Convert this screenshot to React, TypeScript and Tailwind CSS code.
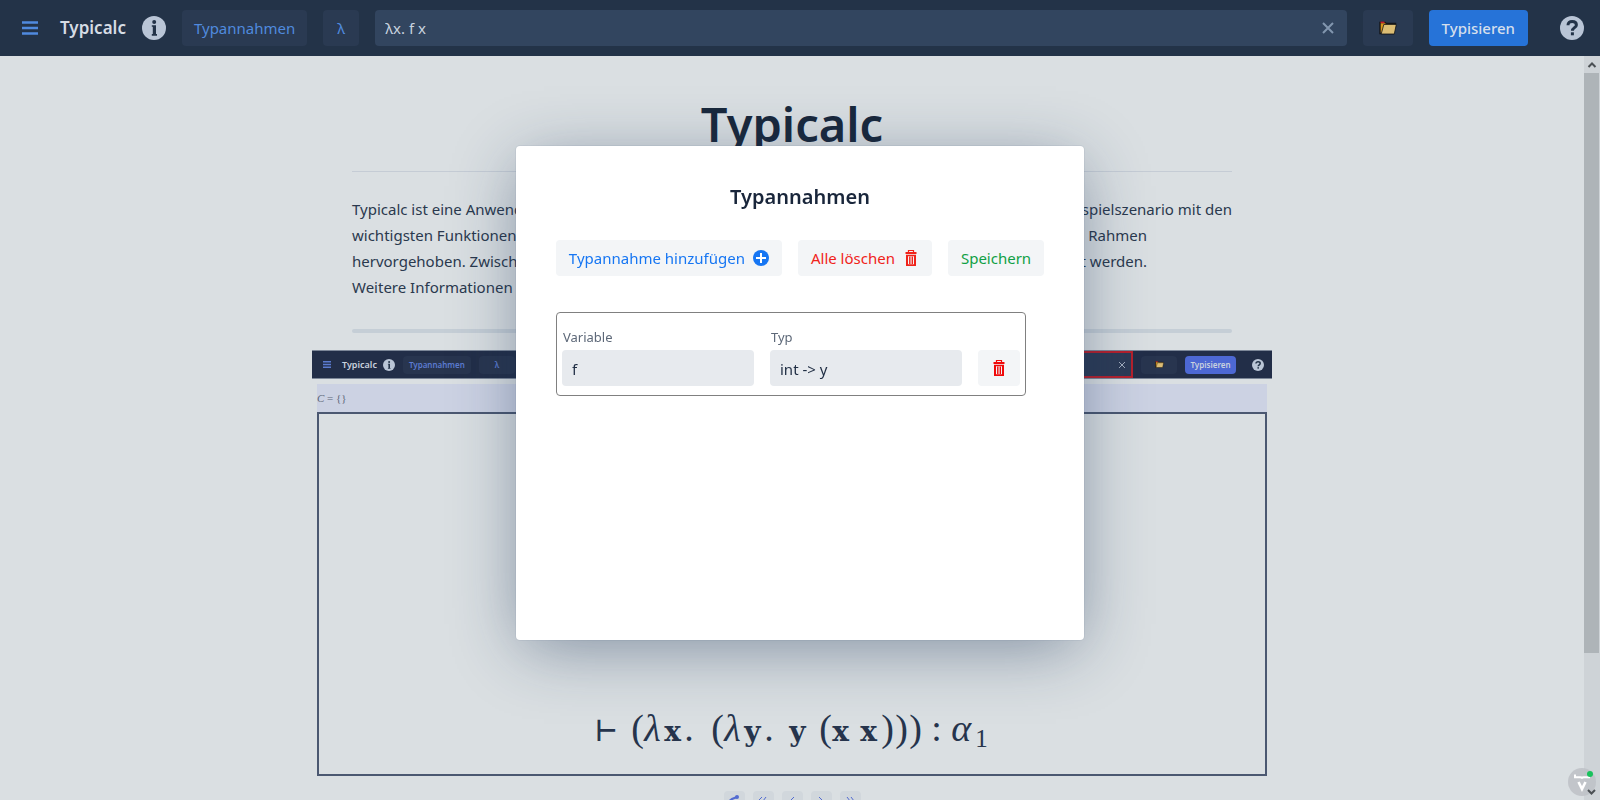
import React, { useState } from "react";

const BurgerIcon = ({ className }: { className: string }) => (
  <svg viewBox="0 0 16 14" className={className} aria-hidden="true">
    <path d="M0 1.500h16M0 7h16M0 12.500h16" stroke="currentColor" strokeWidth="2.600" fill="none" />
  </svg>
);

const InfoIcon = ({ className }: { className: string }) => (
  <svg viewBox="0 0 24 24" className={className} aria-hidden="true">
    <circle cx="12" cy="12" r="12" fill="#b9c5d6" />
    <circle cx="12.200" cy="6" r="2" fill="#233348" />
    <path d="M9.800 9.300h4.200v8.700h1v1.700H9.800V18h1v-7.200h-1z" fill="#233348" />
  </svg>
);

const HelpIcon = ({ className }: { className: string }) => (
  <svg viewBox="0 0 24 24" className={className} aria-hidden="true">
    <circle cx="12" cy="12" r="12" fill="#b9c5d6" />
    <path d="M8 9.200C8 6.600 9.600 5.600 12.100 5.600s4.300 1.300 4.300 3.300c0 2.700-4 2.800-4 5.800" stroke="#233348" strokeWidth="3" fill="none" />
    <rect x="10.900" y="16.300" width="3" height="3" fill="#233348" />
  </svg>
);

const FolderIcon = ({ className }: { className: string }) => (
  <svg viewBox="0 0 18 14" className={className} aria-hidden="true">
    <path d="M1 12.500V1.500h5l1.500 1h9v3l-2 7z" fill="#d9961c" stroke="#14161a" strokeWidth="1.400" />
    <path d="M1.500.6h4v1.500h-4z" fill="#c81e2b" />
    <path d="M2.200 13 4.800 3.500h12.500L15.300 13z" fill="#dcbd74" stroke="#14161a" strokeWidth=".8" />
  </svg>
);

const PlusIcon = () => (
  <svg viewBox="0 0 16 16" className="size-4" aria-hidden="true">
    <circle cx="8" cy="8" r="8" fill="currentColor" />
    <path d="M8 3v10M3 8h10" stroke="#fff" strokeWidth="2" />
  </svg>
);

const TrashIcon = () => (
  <svg viewBox="0 0 16 16" className="size-4" aria-hidden="true" fill="none" stroke="currentColor">
    <path d="M5.500 2.500v-2h5v2" strokeWidth="1.200" />
    <path d="M2.500 3h11" strokeWidth="2" />
    <path d="M4 5v10.200h8V5" strokeWidth="2" />
    <path d="M3 5.500h10" strokeWidth="1.500" />
    <path d="M6.800 6.500V14M9.300 6.500V14" strokeWidth="1.400" />
  </svg>
);

const formula: [string, string][] = [
  ["⊢", "w-[35px] font-['DejaVu_Sans_Mono'] text-[34px]"],
  ["(", "w-[13px] text-[38px]"],
  ["λ", "w-[20px] text-[38px] italic"],
  ["x", "w-[20px] font-['DejaVu_Serif'] text-[28px] font-bold"],
  [".", "w-[27px] text-[38px]"],
  ["(", "w-[13px] text-[38px]"],
  ["λ", "w-[20px] text-[38px] italic"],
  ["y", "w-[20px] font-['DejaVu_Serif'] text-[28px] font-bold"],
  [".", "w-[25px] text-[38px]"],
  ["y", "w-[30px] font-['DejaVu_Serif'] text-[28px] font-bold"],
  ["(", "w-[13px] text-[38px]"],
  ["x", "w-[28px] font-['DejaVu_Serif'] text-[28px] font-bold"],
  ["x", "w-[21px] font-['DejaVu_Serif'] text-[28px] font-bold"],
  [")", "w-[14px] text-[38px]"],
  [")", "w-[14px] text-[38px]"],
  [")", "w-[22px] text-[38px]"],
  [":", "w-[20px] text-[38px]"],
  ["α", "w-[24px] text-[38px] italic"],
];

const Preview = () => (
  <figure className="w-[960px]">
    <div className="flex h-[29px] items-center border-y border-[#7c8798] bg-[#222e48] px-2 text-[8px] font-semibold text-[#c9d1de]">
      <BurgerIcon className="ml-[3px] h-[7px] w-2 text-[#5b7bd0]" />
      <span className="ml-[11px] text-[9px]">Typicalc</span>
      <InfoIcon className="ml-[6px] size-3" />
      <span className="ml-2 rounded-sm bg-[#28354f] px-[6px] py-[3px] text-[#5b7bd0]">Typannahmen</span>
      <span className="ml-2 rounded-sm bg-[#28354f] px-4 py-[3px] text-[#5b7bd0]">λ</span>
      <span className="ml-2 flex h-[27px] flex-1 items-center justify-end border-2 border-[#b5202c] bg-[#2c3b56] pr-[6px] text-[#a3aebf]">
        <svg viewBox="0 0 6 6" className="size-[6px]"><path d="m0 0 6 6M6 0 0 6" stroke="currentColor" /></svg>
      </span>
      <span className="ml-2 flex h-[18px] w-9 items-center justify-center rounded-sm bg-[#28354f]">
        <FolderIcon className="h-[7px] w-[9px]" />
      </span>
      <span className="ml-2 flex h-[18px] w-[51px] items-center justify-center rounded-sm bg-[#4d68d3]">Typisieren</span>
      <HelpIcon className="ml-4 size-3" />
    </div>
    <div className="mx-[5px] mt-[5px] flex h-[28px] items-center bg-[#ccd2e3] font-['Liberation_Serif',serif] text-[11px] text-[#5b6577]">
      <span><i>C</i> = {"{}"}</span>
    </div>
    <div className="mx-[5px] flex h-[364px] items-end justify-center border-2 border-[#4b5871] pb-[18px]">
      <div className="flex items-baseline font-['Liberation_Serif',serif] leading-[48px] text-[#26344c]">
        {formula.map(([glyph, style], i) => (
          <span key={i} className={style}>{glyph}</span>
        ))}
        <sub className="text-[25px]">1</sub>
      </div>
    </div>
    <div className="mt-[15px] flex justify-center gap-2">
      {["M4 9 8 6 13 4", "M9 4 6 7M13 4l-3 4", "M12 4 8 8", "M8 4l4 4", "M7 4l3 4M11 4l3 4"].map((d, i) => (
        <span key={i} className="flex h-5 w-[21px] justify-center rounded-sm bg-[#d1d7dc] pt-[2px]">
          <svg viewBox="0 0 20 12" className="h-3 w-5" fill="none" stroke="#526bd1" strokeWidth={i === 0 ? 2 : 1}>
            <path d={d} />
            {i === 0 && <circle cx="13" cy="4" r="1" fill="#526bd1" />}
          </svg>
        </span>
      ))}
    </div>
  </figure>
);

const Scrollbar = () => (
  <div className="flex w-4 shrink-0 flex-col items-center bg-[#ced3d7]" aria-hidden="true">
    <svg viewBox="0 0 16 17" className="h-[17px] w-4"><path d="m4.500 11 3.500-3.500 3.500 3.500" fill="none" stroke="#4b5054" strokeWidth="2" /></svg>
    <div className="h-[78%] w-full border-r border-[#ced3d7] bg-[#aeb4b8]" />
  </div>
);

const Line = ({ start, end, className }: { start: string; end?: string; className?: string }) => (
  <span className={"flex justify-between whitespace-nowrap " + (className ?? "")}>
    <span>{start}</span>
    {end && <span>{end}</span>}
  </span>
);

const quiet = "flex h-9 items-center justify-center rounded bg-[#f3f5f7]";

export default function App() {
  const [term, setTerm] = useState("λx. f x");
  const [variable, setVariable] = useState("f");
  const [type, setType] = useState("int -> y");

  return (
    <div className="flex h-screen flex-col overflow-hidden bg-[#dadfe2] font-['Noto_Sans',sans-serif] text-[15px] text-[#2a394e]">
      <header className="flex h-14 shrink-0 items-center gap-4 bg-[#233348] pr-4 pl-[22px]">
        <button aria-label="Menü" className="text-[#508ade]">
          <BurgerIcon className="h-[14px] w-4" />
        </button>
        <span className="ml-[6px] text-[17px] font-semibold text-[#d5dce4]">Typicalc</span>
        <button aria-label="Info"><InfoIcon className="size-6" /></button>
        <button className="h-9 rounded bg-[#2a3a52] px-3 pt-px text-[15px] text-[#508ade]">Typannahmen</button>
        <button className="h-9 w-9 rounded bg-[#2a3a52] pt-px text-[15px] text-[#508ade]">λ</button>
        <div className="flex h-9 min-w-0 flex-1 items-center rounded bg-[#32455f] px-[10px]">
          <input aria-label="Lambda-Term" value={term} onChange={(e) => setTerm(e.target.value)} className="min-w-0 flex-1 bg-transparent text-[#c8d3df] outline-none" />
          <button aria-label="Eingabe löschen" onClick={() => setTerm("")} className="pr-[3px] text-[#8296af]">
            <svg viewBox="0 0 12 12" className="size-3"><path d="m1 1 10 10M11 1 1 11" stroke="currentColor" strokeWidth="2" /></svg>
          </button>
        </div>
        <button aria-label="Beispiele" className="flex h-9 w-[50px] items-center justify-center rounded bg-[#2a3a52]">
          <FolderIcon className="h-[14px] w-[18px]" />
        </button>
        <button className="h-9 rounded bg-[#2673d8] px-[13px] pt-px text-[15px] font-medium text-[#d5dfec]">Typisieren</button>
        <button aria-label="Hilfe" className="ml-4"><HelpIcon className="size-6" /></button>
      </header>

      <div className="flex min-h-0 flex-1">
        <main className="flex min-w-0 flex-1 flex-col items-center overflow-hidden pt-8">
          <h1 className="text-[47px] leading-[72px] font-semibold text-[#19283c]">Typicalc</h1>
          <div className="w-[880px]">
            <hr className="mt-[11px] border-t border-[#c5ccd5]" />
            <p className="mt-6 leading-[26px]">
              <Line start="Typicalc ist eine Anwendung zur Typisierung von" end="Lambda-Termen. Es folgt ein Beispielszenario mit den" />
              <Line className="pr-[85px]" start="wichtigsten Funktionen der Anwendung. Diese sind" end="jeweils durch einen roten Rahmen" />
              <Line className="pr-[85px]" start="hervorgehoben. Zwischen den einzelnen Schritten" end="kann beliebig gewechselt werden." />
              <Line start="Weitere Informationen zur Bedienung gibt die Hilfe." />
            </p>
            <hr className="mt-[29px] h-1 rounded-full border-0 bg-[#c5ced6]" />
          </div>
          <div className="mt-[17px]"><Preview /></div>
        </main>
        <Scrollbar />
      </div>

      <div className="fixed right-1 bottom-1 size-7 rounded-full bg-[#bfc2c8]/90">
        <svg viewBox="0 0 28 28" className="size-7" fill="none" aria-hidden="true">
          <path d="M7 6.500v2.800h5.500q1.500 0 1.500 1.500 0-1.500 1.500-1.500H21V7" stroke="#fff" strokeWidth="2" />
          <path d="m10.500 14 3.500 7 3.500-7" stroke="#fff" strokeWidth="2.600" />
          <circle cx="22" cy="6" r="3" fill="#19c25c" />
          <path d="m20 22 3.500 3.500L27 22" stroke="#4b5054" strokeWidth="2" />
        </svg>
      </div>

      <div className="fixed inset-0 flex items-center justify-center pb-[14px]">
        <section role="dialog" aria-labelledby="dialog-title" className="flex h-[494px] w-[568px] flex-col items-center rounded bg-white pt-[35px] shadow-[0_0_0_1px_rgba(25,40,70,0.05),0_12px_64px_-6px_rgba(25,50,85,0.48)]">
          <h2 id="dialog-title" className="text-[20px] leading-8 font-semibold text-[#19263b]">Typannahmen</h2>
          <div className="mt-[27px] flex gap-4 text-[15px]">
            <button className={quiet + " gap-2 px-[13px] text-[#1676f3]"}>Typannahme hinzufügen <PlusIcon /></button>
            <button className={quiet + " gap-2 px-[13px] text-[#f0231a]"}>Alle löschen <TrashIcon /></button>
            <button className={quiet + " px-[13px] text-[#0fa045]"}>Speichern</button>
          </div>
          <div className="mt-9 ml-10 flex w-[470px] items-end gap-4 self-start rounded border border-[#808080] px-[5px] pt-[15px] pb-[9px]">
            <label className="flex-1 text-[13px] leading-[18px] text-[#5d6878]">
              <span className="block pb-1 pl-px">Variable</span>
              <input value={variable} onChange={(e) => setVariable(e.target.value)} className="block h-9 w-full rounded bg-[#e7eaee] px-[10px] pt-px text-[15px] text-[#1f2d43] outline-none" />
            </label>
            <label className="flex-1 text-[13px] leading-[18px] text-[#5d6878]">
              <span className="block pb-1 pl-px">Typ</span>
              <input value={type} onChange={(e) => setType(e.target.value)} className="block h-9 w-full rounded bg-[#e7eaee] px-[10px] pt-px text-[15px] text-[#1f2d43] outline-none" />
            </label>
            <button aria-label="Typannahme löschen" className={quiet + " w-[42px] text-[#f00a0a]"}><TrashIcon /></button>
          </div>
        </section>
      </div>
    </div>
  );
}
